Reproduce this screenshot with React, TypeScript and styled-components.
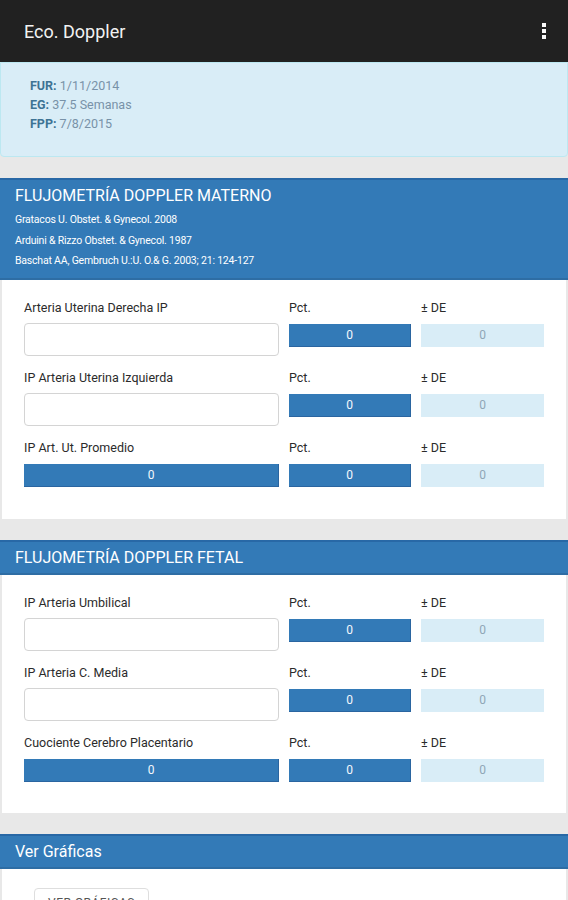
import styled, { createGlobalStyle } from 'styled-components';

const GlobalStyle = createGlobalStyle`
  html, body {
    margin: 0;
    padding: 0;
    background: #e8e8e8;
    font-family: Roboto, "Noto Sans", Arial, sans-serif;
  }
  * {
    box-sizing: border-box;
  }
`;

interface Field {
  label: string;
  computed?: boolean;
}

interface Section {
  title: string;
  refs?: string[];
  fields: Field[];
}

const SECTIONS: Section[] = [
  {
    title: 'FLUJOMETRÍA DOPPLER MATERNO',
    refs: [
      'Gratacos U. Obstet. & Gynecol. 2008',
      'Arduini & Rizzo Obstet. & Gynecol. 1987',
      'Baschat AA, Gembruch U.:U. O.& G. 2003; 21: 124-127',
    ],
    fields: [
      { label: 'Arteria Uterina Derecha IP' },
      { label: 'IP Arteria Uterina Izquierda' },
      { label: 'IP Art. Ut. Promedio', computed: true },
    ],
  },
  {
    title: 'FLUJOMETRÍA DOPPLER FETAL',
    fields: [
      { label: 'IP Arteria Umbilical' },
      { label: 'IP Arteria C. Media' },
      { label: 'Cuociente Cerebro Placentario', computed: true },
    ],
  },
];

const Page = styled.div`
  width: 568px;
`;

const TopBar = styled.header`
  height: 62px;
  background: #212121;
  display: flex;
  align-items: center;
  justify-content: space-between;
  padding: 0 18px 0 24px;
`;

const AppTitle = styled.h1`
  margin: 0;
  font-size: 18px;
  font-weight: 400;
  color: #f2f2f2;
`;

const MenuDots = styled.div`
  display: flex;
  flex-direction: column;
  gap: 2px;
  padding: 4px;

  span {
    width: 4px;
    height: 4px;
    background: #fafafa;
  }
`;

const InfoBox = styled.div`
  background: #d9edf7;
  border: 1px solid #bce8f1;
  border-radius: 0 0 4px 4px;
  padding: 13px 29px 23px;
  margin-bottom: 21px;
  font-size: 12.5px;
  line-height: 19px;
  color: #7892a8;
`;

const InfoLine = styled.div`
  b {
    color: #3d7394;
    font-weight: 700;
  }
`;

const Panel = styled.section`
  margin-bottom: 21px;
`;

const PanelHeader = styled.div`
  background: #337ab7;
  border-top: 2px solid #2868a6;
  border-bottom: 2px solid #2e6da4;
  padding: 7px 15px 6px;
  color: #fff;
`;

const PanelTitle = styled.h2`
  margin: 0;
  font-size: 16px;
  line-height: 18px;
  font-weight: 400;
`;

const RefList = styled.div`
  padding: 5px 0 0;
  font-size: 10.5px;
  line-height: 20.5px;
  letter-spacing: -0.2px;
`;

const PanelBody = styled.div<{ $first?: boolean }>`
  background: #fff;
  margin: 0 2px;
  padding: 20px 22px ${(p) => (p.$first ? '32px' : '31px')};
  display: flex;
  flex-direction: column;
  gap: 14px;
`;

const Row = styled.div`
  display: grid;
  grid-template-columns: 255px 122px 123px;
  column-gap: 10px;
  row-gap: 7px;
  align-items: start;
`;

const Label = styled.label`
  font-size: 12.5px;
  line-height: 16px;
  color: #2b2b2b;
`;

const TextInput = styled.div`
  height: 33px;
  border: 1px solid #d4d4d4;
  border-radius: 4px;
  background: #fff;
`;

const ValueBox = styled.div<{ $light?: boolean }>`
  height: 23px;
  margin-top: 1px;
  display: flex;
  align-items: center;
  justify-content: center;
  font-size: 12px;
  background: ${(p) => (p.$light ? '#d9edf7' : '#337ab7')};
  color: ${(p) => (p.$light ? '#8fa6b6' : '#f4f8fc')};
  border-bottom: ${(p) => (p.$light ? 'none' : '1px solid #2a65a0')};
  border-right: ${(p) => (p.$light ? 'none' : '1px solid #2a65a0')};
`;

const ButtonBody = styled.div`
  background: #fff;
  margin: 0 2px;
  padding: 19px 32px 30px;
`;

const GhostButton = styled.button`
  width: 115px;
  height: 30px;
  border: 1px solid #dedede;
  border-radius: 4px;
  background: #fff;
  color: #555;
  font-family: inherit;
  font-size: 12px;
  letter-spacing: 0.5px;
`;

const FieldRow = ({ field }: { field: Field }) => (
  <Row>
    <Label>{field.label}</Label>
    <Label>Pct.</Label>
    <Label>± DE</Label>
    {field.computed ? <ValueBox>0</ValueBox> : <TextInput />}
    <ValueBox>0</ValueBox>
    <ValueBox $light>0</ValueBox>
  </Row>
);

const App = () => {
  return (
    <Page>
      <GlobalStyle />
      <TopBar>
        <AppTitle>Eco. Doppler</AppTitle>
        <MenuDots>
          <span />
          <span />
          <span />
        </MenuDots>
      </TopBar>

      <InfoBox>
        <InfoLine>
          <b>FUR:</b> 1/11/2014
        </InfoLine>
        <InfoLine>
          <b>EG:</b> 37.5 Semanas
        </InfoLine>
        <InfoLine>
          <b>FPP:</b> 7/8/2015
        </InfoLine>
      </InfoBox>

      {SECTIONS.map((section, i) => (
        <Panel key={section.title}>
          <PanelHeader>
            <PanelTitle>{section.title}</PanelTitle>
            {section.refs && (
              <RefList>
                {section.refs.map((r) => (
                  <div key={r}>{r}</div>
                ))}
              </RefList>
            )}
          </PanelHeader>
          <PanelBody $first={i === 0}>
            {section.fields.map((f) => (
              <FieldRow key={f.label} field={f} />
            ))}
          </PanelBody>
        </Panel>
      ))}

      <Panel>
        <PanelHeader>
          <PanelTitle>Ver Gráficas</PanelTitle>
        </PanelHeader>
        <ButtonBody>
          <GhostButton>VER GRÁFICAS</GhostButton>
        </ButtonBody>
      </Panel>
    </Page>
  );
};

export default App;
